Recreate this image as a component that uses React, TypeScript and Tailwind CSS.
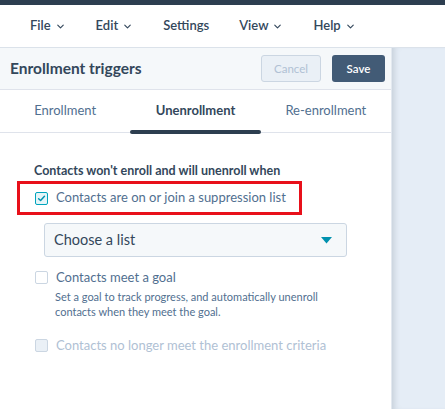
import { ChevronDown } from 'lucide-react'

const menu = [
  { label: 'File', caret: true },
  { label: 'Edit', caret: true },
  { label: 'Settings', caret: false },
  { label: 'View', caret: true },
  { label: 'Help', caret: true },
]

function Box({ checked, disabled }: { checked?: boolean; disabled?: boolean }) {
  return (
    <span
      className={`flex h-[13px] w-[13px] shrink-0 items-center justify-center rounded-[2px] border ${
        checked
          ? 'border-[#00a4bd] bg-[#e5f5f8]'
          : disabled
            ? 'border-[#cbd6e2] bg-[#eaf0f6]'
            : 'border-[#cbd6e2] bg-white'
      }`}
    >
      {checked && (
        <svg width="9" height="9" viewBox="0 0 10 10" fill="none">
          <path d="M1.8 5.2 4 7.3 8.3 2.6" stroke="#0091ae" strokeWidth="1.6" strokeLinecap="round" strokeLinejoin="round" />
        </svg>
      )}
    </span>
  )
}

export default function App() {
  return (
    <div className="flex h-[415px] w-[445px] flex-col overflow-hidden bg-white font-['Lato',sans-serif] text-[#33475b]">
      <div className="h-[5px] bg-[#2d3e50]" />
      <div className="flex h-[43px] items-center gap-[30px] border-b border-[#dbe2ea] pl-[30px] text-[13px] font-semibold">
        {menu.map((m) => (
          <div key={m.label} className="flex items-center gap-[4px]">
            <span>{m.label}</span>
            {m.caret && <ChevronDown size={11} strokeWidth={2.5} />}
          </div>
        ))}
      </div>

      <div className="flex h-[361px]">
        <div className="flex w-[392px] flex-col border-r border-[#e3e9f0] bg-white">
          <div className="flex h-[42px] items-center justify-between border-b border-[#dfe3eb] bg-[#f5f8fa] pl-[10px] pr-[6px]">
            <span className="text-[15.5px] font-bold">Enrollment triggers</span>
            <div className="flex gap-[11px]">
              <button className="h-[27px] w-[60px] rounded-[3px] border border-[#cbd6e2] bg-[#eaf0f6] text-[11.5px] text-[#b0c1d4]">
                Cancel
              </button>
              <button className="h-[27px] w-[53px] rounded-[3px] bg-[#425b76] text-[11.5px] font-semibold text-white">
                Save
              </button>
            </div>
          </div>

          <div className="flex h-[43px] border-b border-[#dfe3eb] text-[13px]">
            <div className="flex flex-1 items-center justify-center text-[#516f90]">Enrollment</div>
            <div className="relative flex flex-1 items-center justify-center font-bold">
              Unenrollment
              <span className="absolute bottom-[-2px] left-0 right-0 h-[4px] rounded-full bg-[#2d3e50]" />
            </div>
            <div className="flex flex-1 items-center justify-center text-[#516f90]">Re-enrollment</div>
          </div>

          <div className="flex flex-col pl-[17px] pt-[29px]">
            <div className="pl-[17px] text-[12.5px] font-bold leading-[18px]">Contacts won't enroll and will unenroll when</div>
            <div className="mt-[1px] flex h-[34px] w-[285px] items-center gap-[8px] border-[3px] border-[#e8101a] pl-[15px] text-[13px] text-[#516f90]">
              <Box checked />
              <span>Contacts are on or join a suppression list</span>
            </div>
            <div className="ml-[27px] mt-[8px] flex h-[34px] w-[303px] items-center justify-between rounded-[3px] border border-[#cbd6e2] bg-[#f5f8fa] pl-[9px] pr-[14px] text-[14.5px] text-[#33475b]">
              <span>Choose a list</span>
              <svg width="11" height="7" viewBox="0 0 11 7">
                <path d="M0 0h11L5.5 6.5z" fill="#0091ae" />
              </svg>
            </div>
            <div className="mt-[11px] flex items-center gap-[8px] pl-[18px] text-[13px] text-[#516f90]">
              <Box />
              <span>Contacts meet a goal</span>
            </div>
            <div className="mt-[1px] pl-[38px] text-[11px] leading-[15px] text-[#516f90]">
              Set a goal to track progress, and automatically unenroll
              <br />
              contacts when they meet the goal.
            </div>
            <div className="mt-[17px] flex items-center gap-[8px] pl-[18px] text-[13px] text-[#b0c1d4]">
              <Box disabled />
              <span>Contacts no longer meet the enrollment criteria</span>
            </div>
          </div>
        </div>
        <div className="flex-1 bg-[#e5edf6] shadow-[inset_6px_0_6px_-4px_rgba(45,62,80,0.18)]" />
      </div>
    </div>
  )
}
